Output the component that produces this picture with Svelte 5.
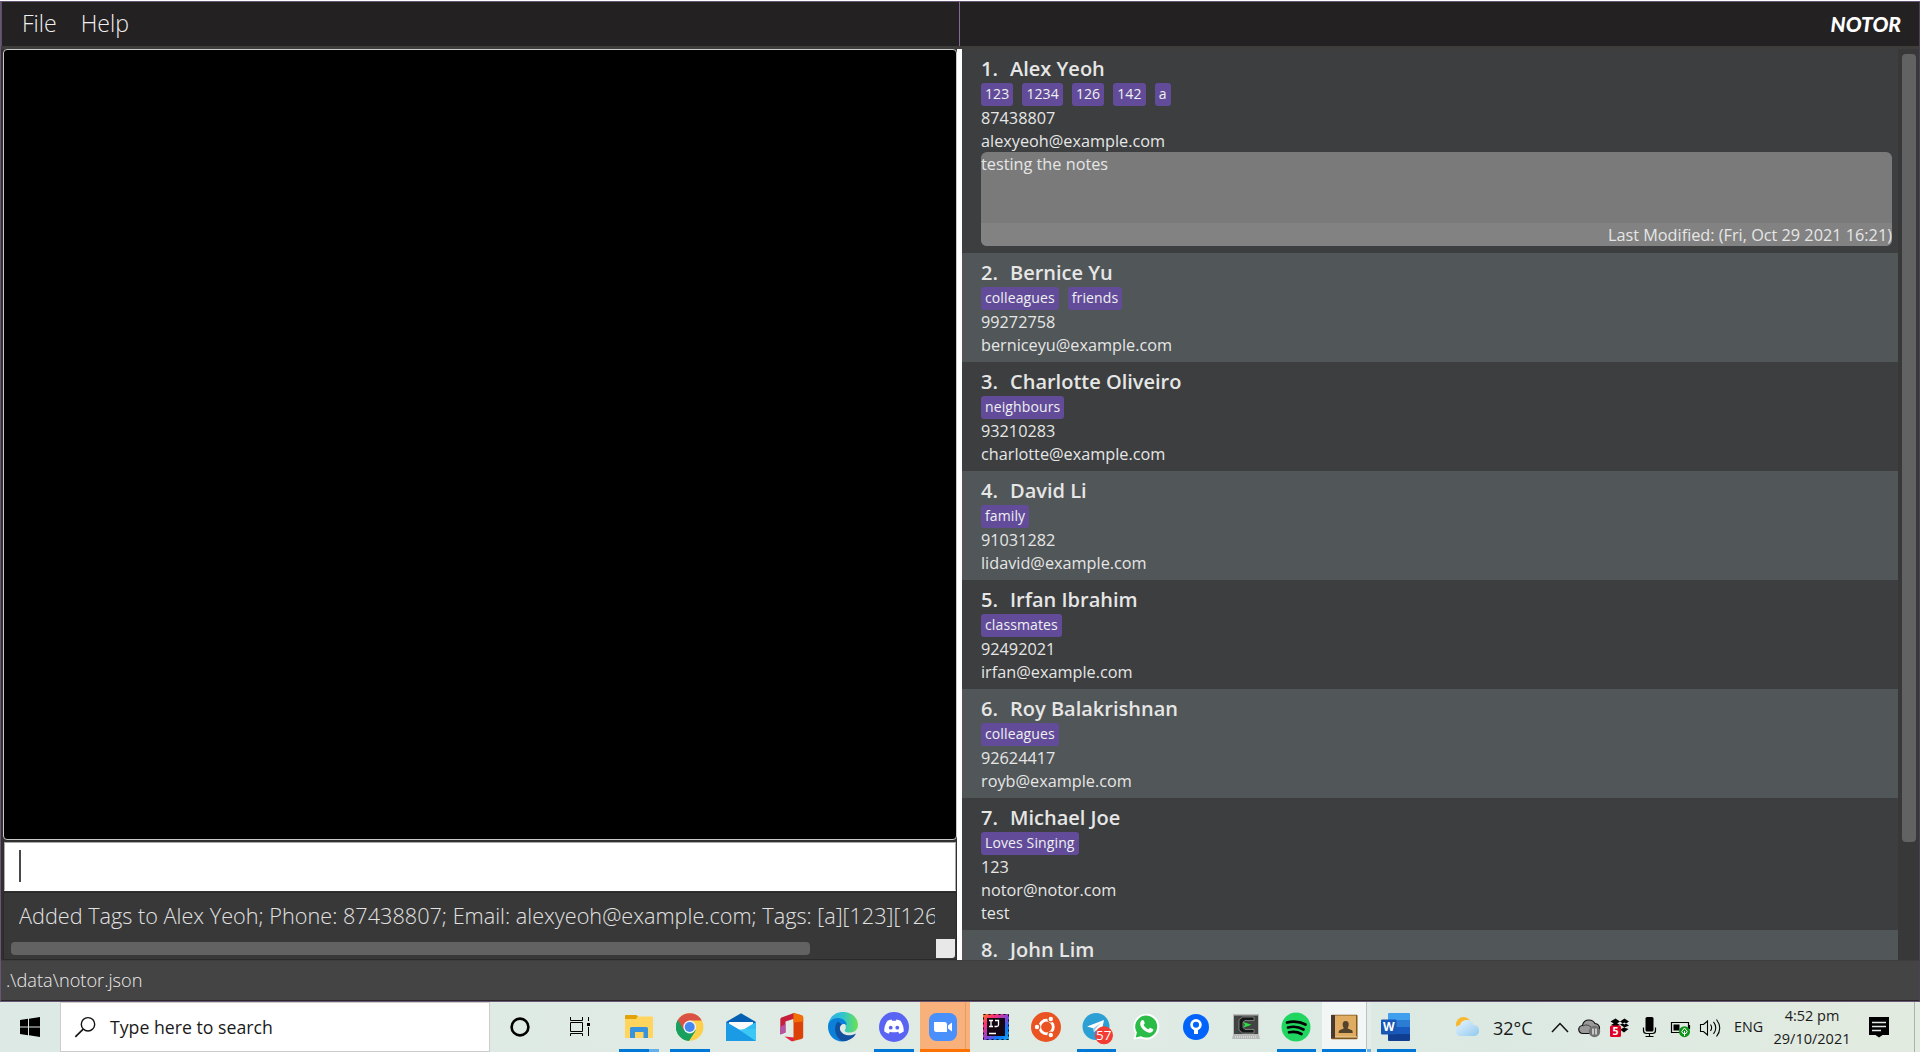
<script>
  const contacts = [
    { name: 'Alex Yeoh', tags: ['123', '1234', '126', '142', 'a'], lines: ['87438807', 'alexyeoh@example.com'], note: 'testing the notes', modified: 'Last Modified: (Fri, Oct 29 2021 16:21)' },
    { name: 'Bernice Yu', tags: ['colleagues', 'friends'], lines: ['99272758', 'berniceyu@example.com'] },
    { name: 'Charlotte Oliveiro', tags: ['neighbours'], lines: ['93210283', 'charlotte@example.com'] },
    { name: 'David Li', tags: ['family'], lines: ['91031282', 'lidavid@example.com'] },
    { name: 'Irfan Ibrahim', tags: ['classmates'], lines: ['92492021', 'irfan@example.com'] },
    { name: 'Roy Balakrishnan', tags: ['colleagues'], lines: ['92624417', 'royb@example.com'] },
    { name: 'Michael Joe', tags: ['Loves Singing'], lines: ['123', 'notor@notor.com', 'test'] },
    { name: 'John Lim', tags: [], lines: [] }
  ];
</script>

<div class="screen">
  <div class="window">
    <header>
      <nav><span>File</span><span>Help</span></nav>
      <div class="brand"><span>NOTOR</span></div>
    </header>
    <main>
      <section class="left">
        <div class="canvas"></div>
        <div class="command"><i></i></div>
        <div class="result">
          <p>Added Tags to Alex Yeoh; Phone: 87438807; Email: alexyeoh@example.com; Tags: [a][123][126</p>
          <div class="hbar"><div class="hthumb"></div><div class="corner"></div></div>
        </div>
      </section>
      <section class="list">
        {#each contacts as c, i}
          <article class:alt={i % 2 === 1}>
            <h2><span>{i + 1}.</span>{c.name}</h2>
            {#if c.tags.length}
              <div class="tags">{#each c.tags as t}<span>{t}</span>{/each}</div>
            {/if}
            {#each c.lines as l}<p>{l}</p>{/each}
            {#if c.note}
              <div class="note"><p>{c.note}</p><p class="mod">{c.modified}</p></div>
            {/if}
          </article>
        {/each}
      </section>
      <div class="vbar"><div class="vthumb"></div></div>
    </main>
    <footer>.\data\notor.json</footer>
  </div>

  <div class="taskbar">
    <svg width="60" height="50" viewBox="0 0 60 50"><path d="M20 18 28 16.8V24.5H20zM29 16.7 40 15V24.5H29zM20 25.5H28V33.2L20 32zM29 25.5H40V35L29 33.3z" /></svg>
    <div class="search">
      <svg width="49" height="50" viewBox="61 0 49 50"><circle cx="88" cy="22.3" r="6.7" fill="none" stroke="#111" stroke-width="1.4" /><path d="M83.2 27.2 75.3 34.8" stroke="#111" stroke-width="1.6" /></svg>
      <span>Type here to search</span>
    </div>
    <svg width="60" height="50" viewBox="490 0 60 50"><circle cx="520" cy="25" r="8.4" fill="none" stroke="#000" stroke-width="2.6" /></svg>
    <svg width="63" height="50" viewBox="550 0 63 50"><path d="M570.5 15v3.5h12V15M570.5 20.5h12v9h-12zM570.5 34v-2.5h12V34M588.5 15v4M588.5 25v9" fill="none" stroke="#000" /><path d="M587 21h3v3h-3z" /></svg>
    <svg width="51" height="50" viewBox="613 0 51 50">
      <path d="M626 13h10l2 1.5h14a1 1 0 0 1 1 1V36h-28V14z" fill="#ffd55e" /><path d="M626 13h9.5l2.5 1-2 3h-11v-3a1 1 0 0 1 1-1z" fill="#e3a20a" />
      <path d="M630 36V26.5a1.5 1.5 0 0 1 1.5-1.5h15a1.500 1.500 0 0 1 1.500 1.500V36h-4.500v-6h-8.500v6z" fill="#3993dc" /><path d="M619 47h30v3h-30z" fill="#0078d7" /><path d="M649 47h10v3h-10z" fill="#66afe8" />
    </svg>
    <svg width="51" height="50" viewBox="664 0 51 50">
      <circle cx="689.700" cy="25" r="13.700" fill="#fdd04a" /><path d="M689.700 25 677.800 18.100A13.700 13.700 0 0 0 689 38.700L695.600 28.400z" fill="#17a05e" /><path d="M689.700 25 677.800 18.100A13.700 13.700 0 0 1 701.800 18.600H689.700z" fill="#da5245" /><path d="M677.800 18.100 683.800 28.400 689 18.600z" fill="#da5245" /><path d="M677.800 18.100 683.800 28.400 690 31 695.600 28.400 689 38.700A13.700 13.700 0 0 1 677.800 18.100z" fill="#17a05e" />
      <circle cx="689.700" cy="25" r="6.400" fill="#f2f2f2" /><circle cx="689.700" cy="25" r="5" fill="#4688f1" /><path d="M670 47h40v3h-40z" fill="#0078d7" />
    </svg>
    <svg width="51" height="50" viewBox="715 0 51 50">
      <path d="M726 20 741 11.200 756 20v4h-30z" fill="#0560b4" /><path d="M729 20h24v10h-24z" fill="#fafafa" /><path d="M726 20 741 29 756 20V39H726z" fill="#32bdf2" /><path d="M726 39 756 39 739 27.500 726 20z" fill="#1b9be5" /><path d="m739 27.500 17 11.500V27z" fill="#3cc8f5" />
    </svg>
    <svg width="51" height="50" viewBox="766 0 51 50">
      <path d="M794 11 781.500 15.500Q780.300 16 780.300 17.300V32.500L785.500 30.500V19.500L794 16.800z" fill="#c51f3b" /><path d="M780.300 25v7.500l5.200-2V22z" fill="#b454a9" /><path d="M792 11.300 794 11l7.500 2.300q1.700.6 1.700 2.200V35q0 1.500-1.700 2L793.500 39V11.500z" fill="#dc4208" /><path d="M793.500 11 801.500 13.300q1.700.6 1.700 2.200v4l-9.700 1z" fill="#f26e06" /><path d="m784.500 34.500 9.500 1V39q-1.500.5-3 0z" fill="#e32444" />
    </svg>
    <svg width="51" height="50" viewBox="817 0 51 50">
      <defs><linearGradient id="edgeTop"><stop stop-color="#2caee6" /><stop offset=".5" stop-color="#30c4cf" /><stop offset="1" stop-color="#6be34f" /></linearGradient></defs>
      <path d="M828 24C829 15 835 10 843 10c9 0 15 6 15 13 0 5-4 7.500-8.500 7.500-3.500 0-5.500-1-4.500-2.500 2-3.500.5-8-5-9.500-5-1-10 2-12 5.500z" fill="url(#edgeTop)" />
      <path d="M828 25c0-6 5-9 10-9 5.500 0 9 4 8.500 7-2-2-6.500-1-7.500 2-1.500 5 2 12 9 13.500-11 4-20-4-20-13.500z" fill="#0a80d8" /><path d="M838 19.500c-4.500 4-4 14 3.500 19.500 7 .500 12.500-3 14.500-7.500-5 3-14 2.500-16-4-.500-2.500.500-4 2-5z" fill="#11509e" />
    </svg>
    <svg width="51" height="50" viewBox="868 0 51 50">
      <circle cx="894" cy="25" r="15" fill="#5964f2" /><path d="M887.500 18.700q2-.9 4-1.200l.7 1.300h3.600l.7-1.300q2 .3 4 1.200 3.500 5 3.200 10.800-2 1.500-4.400 2.200l-1.200-2q-4.100 1.200-8.200 0l-1.200 2q-2.400-.7-4.400-2.200-.3-6.300 3.200-10.800z" fill="#fff" /><circle cx="890.700" cy="25.700" r="1.900" fill="#5964f2" /><circle cx="897.300" cy="25.700" r="1.900" fill="#5964f2" /><path d="M874 47h40v3h-40z" fill="#0078d7" />
    </svg>
    <svg width="52" height="50" viewBox="919 0 52 50">
      <path d="M920 0h50v50h-50z" fill="#f9b17c" /><path d="M965.500 0v47" stroke="#e89a64" /><path d="M920 47h50v3h-50z" fill="#ff7200" /><rect x="929" y="11" width="28" height="28" rx="7.500" fill="#4a90fc" /><path d="M934 20h10.500a2.500 2.500 0 0 1 2.500 2.500V30h-10.500a2.500 2.500 0 0 1-2.500-2.500zM948 23.500l4-3v9l-4-3z" fill="#fff" />
    </svg>
    <svg width="50" height="50" viewBox="971 0 50 50">
      <defs><linearGradient id="ij" x2="1" y2="1"><stop stop-color="#fc801d" /><stop offset=".25" stop-color="#fe2d78" /><stop offset=".55" stop-color="#7b48de" /><stop offset=".75" stop-color="#087cfa" /><stop offset="1" stop-color="#21a8f0" /></linearGradient></defs>
      <rect x="983" y="12" width="26" height="26" fill="url(#ij)" /><path d="M983.500 12.500h25v25h-25z" fill="none" stroke="#111" stroke-dasharray="2 3" /><path d="M987 16h18v18h-18z" fill="#140713" /><path d="M989 18.500h4M991 18.500v6M989 24.500h4M995 18.500h3.500v4.500q0 1.500-2 1.500h-2M989 31.500h7" fill="none" stroke="#fff" stroke-width="1.300" />
    </svg>
    <svg width="50" height="50" viewBox="1021 0 50 50">
      <circle cx="1046" cy="25" r="15" fill="#ea5322" /><circle cx="1046.500" cy="25" r="6.800" fill="none" stroke="#fff" stroke-width="2.800" /><g fill="#fff" stroke="#ea5322" stroke-width="1.200"><circle cx="1037" cy="25" r="2.800" /><circle cx="1050.800" cy="17" r="2.800" /><circle cx="1050.800" cy="33" r="2.800" /></g>
    </svg>
    <svg width="50" height="50" viewBox="1071 0 50 50">
      <circle cx="1096" cy="24.500" r="13.500" fill="#2c9fd4" /><path d="m1087 24.500 17-6.500-3 14-5-3.700-2 2-.7-4z" fill="#fff" /><path d="m1093.500 26 7.500-5-5.500 6-1.500 3z" fill="#a9cfe5" /><circle cx="1104" cy="33.300" r="9" fill="#f23c34" /><text x="1103.800" y="38.300" text-anchor="middle" font-size="13.500" fill="#fff">57</text><path d="M1077 47h39v3h-39z" fill="#0078d7" />
    </svg>
    <svg width="50" height="50" viewBox="1121 0 50 50">
      <path d="M1133.500 37.500 1135 31A13 13 0 1 1 1141 36.500z" fill="#fff" /><path d="m1135.700 35.500 1.200-5A11 11 0 1 1 1141 34.300z" fill="#2bbc47" /><path d="M1141.500 18.500c1-1 2-.7 2.500.5l.7 2c.2.700-.8 1.600-1 2 1 2 2.500 3.500 4.800 4.300l1.500-1.600 3.300 1.600c.2 3-2.800 4-5 3.200-4-1.200-7-4.200-8-7.500-.3-2 .2-3.500 1.200-4.500z" fill="#fff" />
    </svg>
    <svg width="50" height="50" viewBox="1171 0 50 50">
      <circle cx="1196" cy="25" r="13" fill="#0263fb" /><circle cx="1196" cy="22.800" r="4.400" fill="none" stroke="#fff" stroke-width="2.700" /><path d="M1194 26h4v6h-4z" fill="#fff" />
    </svg>
    <svg width="50" height="50" viewBox="1221 0 50 50">
      <path d="M1233 12h26v21l1 4h-28l1-4z" fill="#b8bbba" /><path d="M1234 13.500h24V32h-24z" fill="#414443" /><path d="M1254 15h-11.500l-3.500 3v10l3.500 3H1254v-3.500h-9l-2-2V20l2-1.500h9z" fill="#151817" stroke="#aeb2b0" stroke-width=".6" /><path d="m1243 20 8.500 2.700-8.500 3 2-3z" fill="#2de145" /><path d="M1235 35h22" stroke="#eee" stroke-dasharray="1 1" />
    </svg>
    <svg width="50" height="50" viewBox="1271 0 50 50">
      <circle cx="1296" cy="25" r="14.500" fill="#20d661" /><path d="M1287 20.500q10-2.600 18.500 2M1288 25.500q8.500-2.200 15.500 2M1289 30.300q7-1.600 12.500 1.700" fill="none" stroke="#000" stroke-width="2.700" stroke-linecap="round" /><path d="M1277 47h39v3h-39z" fill="#0078d7" />
    </svg>
    <svg width="50" height="50" viewBox="1321 0 50 50">
      <path d="M1322 0h49v50h-49z" fill="#f2f6f5" /><path d="M1367 0h4v50h-4z" fill="#e4ecea" /><path d="M1366.500 0v47" stroke="#b9c5c2" /><rect x="1331" y="12.700" width="26.500" height="24.500" rx="1" fill="#80571e" /><path d="M1335 13.500h21V35h-21z" fill="#dfac62" /><path d="M1331 13h4v23h-4z" fill="#493a31" /><path d="M1335 35h22" stroke="#f1d39e" /><path d="M1345.700 19c2.500 0 3.200 2 3 4-.2 1.800-1 2.300-1 3.500l4.300 1.800q.8.700.7 2.700h-14q-.1-2 .7-2.700l4.300-1.800c0-1.200-.8-1.700-1-3.500-.2-2 .5-4 3-4z" fill="#53432d" /><path d="M1322 47h44v3h-44z" fill="#0078d7" /><path d="M1367 47h4v3h-4z" fill="#66afe8" />
    </svg>
    <svg width="50" height="50" viewBox="1371 0 50 50">
      <path d="M1388 12a1 1 0 0 1 1-1h20a1 1 0 0 1 1 1v6h-22z" fill="#41a0ee" /><path d="M1388 18h22v7h-22z" fill="#2b7cd3" /><path d="M1388 25h22v7h-22z" fill="#185abd" /><path d="M1388 32h22v6a1 1 0 0 1-1 1h-20a1 1 0 0 1-1-1z" fill="#103f91" /><rect x="1381" y="17.500" width="15.500" height="15" rx="1" fill="#1857b5" /><text x="1388.700" y="29.300" text-anchor="middle" font-size="12" font-weight="700" fill="#fff">W</text><path d="M1377 47h39v3h-39z" fill="#0078d7" />
    </svg>
    <svg class="weather" width="72" height="50" viewBox="1421 0 72 50">
      <defs><linearGradient id="cloud" x2="1" y2="1"><stop stop-color="#e9f6ff" /><stop offset="1" stop-color="#91c8ee" /></linearGradient></defs>
      <circle cx="1463.500" cy="22.500" r="7.500" fill="#f9b72e" /><path d="M1461 34a5.500 5.500 0 0 1-1-10.900q1.500-5.100 7-5.100 5 0 6.500 5a5.600 5.600 0 0 1 1.500 11z" fill="url(#cloud)" />
    </svg>
    <span class="temp">32°C</span>
    <svg class="tray" width="197" height="50" viewBox="1537 0 197 50">
      <path d="m1552 30 8-8.500 8 8.500" fill="none" stroke="#111" stroke-width="1.500" />
      <path d="M1583 31.500a4 4 0 0 1-.5-8q1-5.500 6.500-5.500 4 0 6 3.500 4.500.5 4.500 5 0 4-4 5z" fill="#999" stroke="#111" stroke-width="1.200" /><path d="M1583 24q5-3.500 11 4" fill="none" stroke="#444" /><circle cx="1594.500" cy="29.500" r="5.700" fill="#717171" /><path d="M1593 26.500v6M1596 26.500v6" stroke="#fff" stroke-width="1.200" />
      <path d="m1615.500 16.500 4.500 3-4.500 3-5-3zM1624.500 16.500l4.500 3-4.500 3-4.500-3zM1620 22.500l4.500 3 4.500-2-4.500-3zM1620 27.500l4-2 4.500 1.500-4.500 3.500zM1611 23l4.500-2.500 4.500 2.500-4.500 2z" /><rect x="1610" y="23.500" width="11" height="11.500" rx="1.500" fill="#df0024" /><text x="1615.500" y="33" text-anchor="middle" font-size="10.500" font-weight="700" fill="#fff">5</text>
      <rect x="1645.500" y="15" width="8" height="14.500" rx="1.500" /><path d="M1643.500 25.500v3q0 3 3 3h6q3 0 3-3v-3M1649.500 31.500v3M1645.500 34.500h8" fill="none" stroke="#000" stroke-width="1.200" />
      <path d="M1671.500 20.500h17v10h-17zM1689.500 23v4" fill="none" stroke="#000" stroke-width="1.200" /><path d="M1673.500 22.500h6v6h-6z" /><circle cx="1684.500" cy="29.700" r="5.500" fill="#0d9419" /><path d="m1684.500 26 2.700 3.300q-.3 2.500-2.700 2.500t-2.700-2.500zM1684.500 29v5" fill="none" stroke="#fff" />
      <path d="M1700.500 22.500h3l4-3.500v14l-4-3.500h-3zM1710.500 22.500q2.300 3 0 6.500M1713.500 19.800q4.500 6 0 12M1716.500 17.500q6.500 8.500 0 17" fill="none" stroke="#000" stroke-width="1.100" />
    </svg>
    <span class="eng">ENG</span>
    <div class="clock"><span>4:52 pm</span><span>29/10/2021</span></div>
    <svg class="notif" width="55" height="50" viewBox="1865 0 55 50"><path d="M1869 15h20v18h-6.500l-3.500 2.500-3.500-2.500h-6.500z" /><path d="M1872 20.500h14M1872 24.500h14M1872 28.500h9" stroke="#e0ebe5" stroke-width="1.300" /><path d="M1914.500 0v50" stroke="#a9b4b0" /></svg>
  </div>
</div>

<style>
  :global(body) { margin: 0; overflow: hidden; }
  * { box-sizing: border-box; }
  .screen { width: 1920px; height: 1052px; overflow: hidden; display: flex; flex-direction: column; font-family: 'Open Sans', 'Noto Sans', sans-serif; background: #fff; }
  p, h2 { margin: 0; }
  .window { height: 1001px; margin-top: 1px; display: flex; flex-direction: column; background: #3f3c3c; border: 1px solid #685774; border-right-color: #4b4152; }
  header { height: 44px; display: flex; background: #242122; flex: none; }
  nav { width: 959px; display: flex; gap: 24px; padding-left: 20px; border-right: 1px solid #866896; border-left: 1px solid #5f4c69; font-size: 23.100px; font-weight: 300; line-height: 43px; color: #f0f0f0; }
  .brand { flex: 1; text-align: right; padding-right: 18px; color: #fff; font: italic 900 21px/43px Lato, sans-serif; }
  main { margin-top: 3px; height: 911px; flex: none; display: flex; }
  .left { width: 961px; border-right: 5px solid #fff; padding-left: 2px; display: flex; flex-direction: column; background: #303030; }
  .canvas { height: 791px; width: 954px; background: #000; border: 1px solid #c8c8c8; border-radius: 4px; }
  .command { height: 49px; margin: 2px 0 0 1px; width: 952px; background: #fff; border: 1px solid #aaa; border-bottom-color: #fff; padding: 7px 0 0 14px; }
  .command i { display: block; width: 2px; height: 32px; background: #484848; }
  .result { flex: 1; width: 954px; margin-top: 1px; background: #383838; border: 1px solid #2a2a2a; display: flex; flex-direction: column; overflow: hidden; }
  .result p { margin: 0 21px 0 15px; height: 46px; line-height: 46px; font-size: 21.670px; font-weight: 300; color: #e2e2e2; white-space: nowrap; overflow: hidden; }
  .hbar { height: 19px; display: flex; justify-content: space-between; align-items: center; padding: 0 1px 0 7px; }
  .hthumb { width: 799px; height: 13px; border-radius: 4px; background: #626262; }
  .corner { width: 19px; height: 19px; background: #e8e8e8; border-radius: 0 0 3px 0; }
  .list { width: 936px; overflow: hidden; display: flex; flex-direction: column; background: #3c3e3f; }
  article { flex: none; padding: 6px 6px 6px 19px; background: #3c3e3f; color: #e6e6e6; }
  article:first-child { padding-bottom: 7px; }
  .alt { background: #515658; }
  h2 { height: 28px; line-height: 28px; font-size: 20px; font-weight: 600; display: flex; }
  h2 span { width: 29px; }
  article p { height: 23px; line-height: 25px; font-size: 16.250px; }
  .tags { height: 23px; display: flex; gap: 9px; }
  .tags span { background: #624c9a; border-radius: 3px; padding: 0 4px; font-size: 14px; letter-spacing: .12px; line-height: 22px; color: #f0f0f0; }
  .note { height: 94px; border-radius: 6px; overflow: hidden; background: #7a7a7a; display: flex; flex-direction: column; justify-content: space-between; }
  .note .mod { text-align: right; background: #828282; }
  .vbar { flex: 1; background: #383838; padding: 5px 0 0 4px; }
  .vthumb { width: 14px; height: 788px; border-radius: 4px; background: #626262; }
  footer { flex: 1; margin-top: 1px; background: #444; border-bottom: 1px solid #292529; padding-left: 5px; font-size: 18.200px; font-weight: 300; line-height: 39px; color: #ededed; }
  .taskbar { height: 50px; flex: none; display: flex; background: linear-gradient(90deg, #dde9e4, #e0ebe4 50%, #dce9e3 78%, #e2ebdf); color: #1a1a1a; }
  .taskbar svg { display: block; flex: none; }
  .search { width: 430px; background: #fff; border: 1px solid #ccc; display: flex; align-items: center; font-size: 17.700px; flex: none; }
  .temp { width: 44px; font-size: 18px; line-height: 53px; white-space: nowrap; }
  .eng { width: 35px; font-size: 14.300px; line-height: 50px; }
  .clock { width: 86px; margin-right: 10px; display: flex; flex-direction: column; align-items: center; justify-content: center; font-size: 14.500px; line-height: 23px; }
</style>
